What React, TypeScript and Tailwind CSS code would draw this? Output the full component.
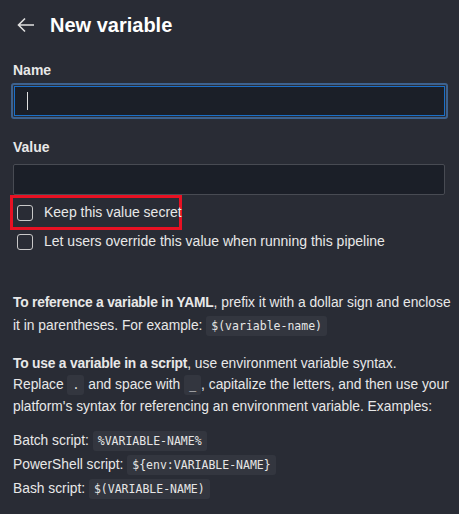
import React from 'react'

const Code = ({ children }: { children: React.ReactNode }) => (
  <code className="rounded-[3px] bg-[#33363f] px-[5px] py-[3px] font-['DejaVu_Sans_Mono',monospace] text-[11.5px] text-[#e6e6e6]">
    {children}
  </code>
)

const Checkbox = ({ label }: { label: string }) => (
  <label className="flex items-center gap-[11px] whitespace-nowrap">
    <span className="h-[16px] w-[16px] shrink-0 rounded-[3px] border border-[#c8c8c8]" />
    <span className="text-[14px] text-[#e8e8e8]">{label}</span>
  </label>
)

export default function App() {
  return (
    <div className="h-[514px] w-[459px] overflow-hidden bg-[#292c35] px-[13px] font-['Liberation_Sans',sans-serif] text-[#e8e8e8]">
      <div className="flex items-center gap-[15px] pt-[10px] pb-[20px]">
        <svg width="18" height="16" viewBox="0 0 18 16" className="ml-[4px]">
          <path d="M17 8H2M8 1.5L1.5 8L8 14.5" fill="none" stroke="#e0e0e0" strokeWidth="1.6" />
        </svg>
        <h1 className="text-[20px] font-bold text-white">New variable</h1>
      </div>

      <div className="text-[14px] font-semibold">Name</div>
      <div className="mt-[2px] rounded-[3px] border-[2px] border-[#3d628f] p-[1px] -mx-[2px]">
        <div className="flex h-[30px] items-center border border-[#1a6fc8] bg-[#1b1f28] px-[12px]">
          <span className="h-[18px] w-[1px] bg-[#e0e0e0]" />
        </div>
      </div>

      <div className="mt-[18px] text-[14px] font-semibold">Value</div>
      <div className="mt-[6px] mr-[1px] h-[31px] rounded-[2px] border border-[#484b53] bg-[#1b1f28]" />

      <div className="mt-0 -ml-[3px] w-[172px] border-[3px] border-[#e81123] py-[4px] pl-[4px]">
        <Checkbox label="Keep this value secret" />
      </div>
      <div className="mt-[1px] pl-[4px]">
        <Checkbox label="Let users override this value when running this pipeline" />
      </div>

      <div className="-mr-[13px] mt-[39px] whitespace-nowrap text-[13.8px] leading-[23px]">
        <p>
          <b className="tracking-[-0.2px]">To reference a variable in YAML</b>, prefix it with a dollar sign and enclose
          <br />
          it in parentheses. For example: <Code>$(variable-name)</Code>
        </p>
        <p className="mt-[15px] leading-[21px]">
          <b className="tracking-[-0.2px]">To use a variable in a script</b>, use environment variable syntax.
          <br />
          Replace <Code>.</Code> and space with <Code>_</Code>, capitalize the letters, and then use your
          <br />
          platform's syntax for referencing an environment variable. Examples:
        </p>
        <div className="mt-[12px] leading-[24px]">
          <div>
            Batch script: <Code>%VARIABLE-NAME%</Code>
          </div>
          <div>
            PowerShell script: <Code>{'${env:VARIABLE-NAME}'}</Code>
          </div>
          <div>
            Bash script: <Code>$(VARIABLE-NAME)</Code>
          </div>
        </div>
      </div>
    </div>
  )
}
